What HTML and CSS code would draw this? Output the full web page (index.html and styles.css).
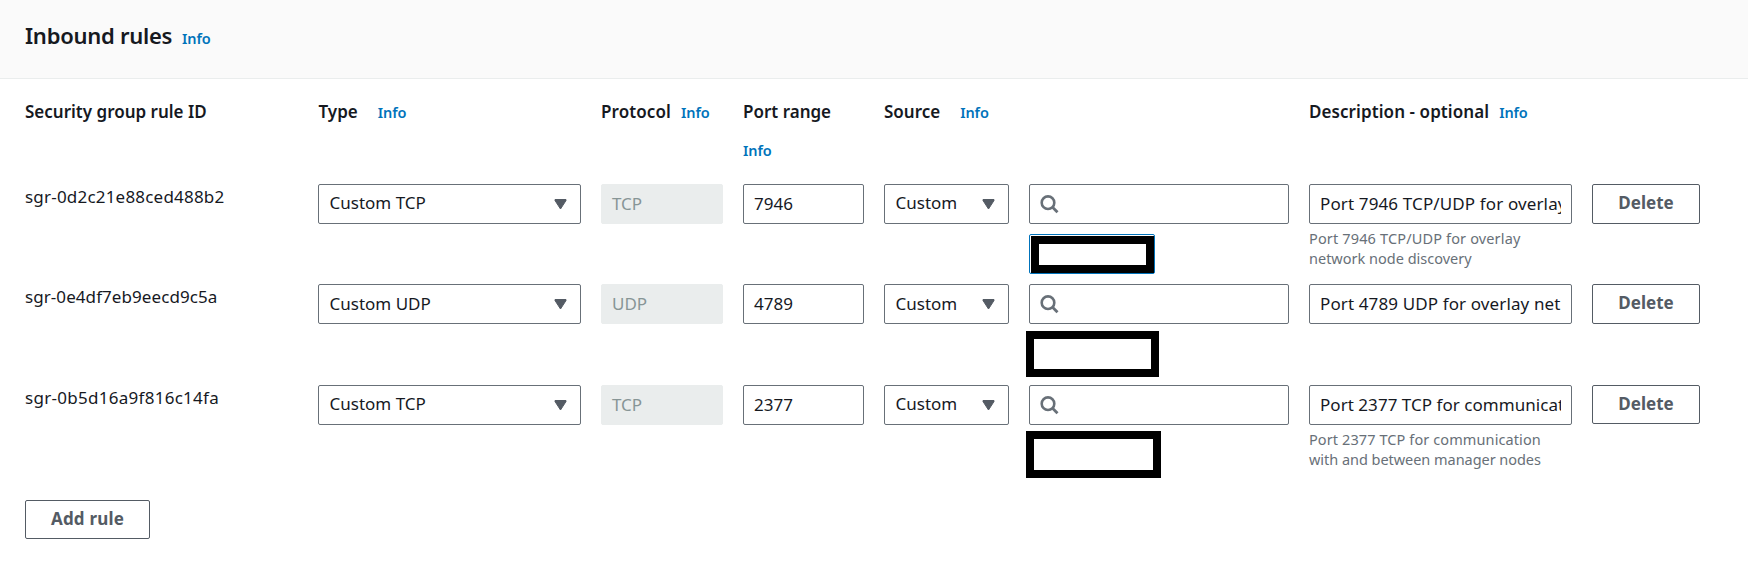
FILE: index.html
```html
<!DOCTYPE html>
<html lang="en">
<head>
<meta charset="utf-8">
<title>Inbound rules</title>
<link rel="stylesheet" href="styles.css">
</head>
<body>
<svg class="defs" aria-hidden="true">
  <symbol id="caret" viewBox="0 0 13 11"><path d="M1 .5h11v1L6.500 10 1 1.500z" fill="#545b64" stroke="#545b64" stroke-linejoin="round"/></symbol>
  <symbol id="search" viewBox="0 0 19 19"><circle cx="8" cy="7.700" r="6.300" fill="none" stroke="#687078" stroke-width="2.600"/><path d="M12.300 12l5.200 5.200" stroke="#687078" stroke-width="2.800"/></symbol>
</svg>
<header class="panel-header">
  <h1 class="title">Inbound rules</h1><a class="info">Info</a>
</header>
<main class="panel">
  <div class="grid head">
    <div class="label"><span class="t-id">Security group rule ID</span></div>
    <div class="label wide"><span class="t-type">Type</span><a class="info">Info</a></div>
    <div class="label"><span class="t-protocol">Protocol</span><a class="info">Info</a></div>
    <div class="label stacked"><span class="t-port">Port range</span><a class="info">Info</a></div>
    <div class="label wide source"><span class="t-source">Source</span><a class="info">Info</a></div>
    <div class="label"><span class="t-desc">Description - optional</span><a class="info">Info</a></div>
  </div>

  <div class="grid row first">
    <div class="rule-id">sgr-0d2c21e88ced488b2</div>
    <div class="select"><span>Custom TCP</span><svg class="caret"><use href="#caret"/></svg></div>
    <div class="field disabled">TCP</div>
    <div class="field">7946</div>
    <div class="select narrow"><span>Custom</span><svg class="caret"><use href="#caret"/></svg></div>
    <div class="search-cell">
      <div class="field"><svg class="search"><use href="#search"/></svg></div>
      <div class="token"><div class="mask mask-a"></div></div>
    </div>
    <div class="desc">
      <div class="field"><span class="clip d1">Port 7946 TCP/UDP for overlay</span></div>
      <div class="hint"><span class="h1">Port 7946 TCP/UDP for overlay</span><br><span class="h2">network node discovery</span></div>
    </div>
    <button class="button">Delete</button>
  </div>

  <div class="grid row second">
    <div class="rule-id">sgr-0e4df7eb9eecd9c5a</div>
    <div class="select"><span>Custom UDP</span><svg class="caret"><use href="#caret"/></svg></div>
    <div class="field disabled">UDP</div>
    <div class="field">4789</div>
    <div class="select narrow"><span>Custom</span><svg class="caret"><use href="#caret"/></svg></div>
    <div class="search-cell">
      <div class="field"><svg class="search"><use href="#search"/></svg></div>
      <div class="mask mask-b"></div>
    </div>
    <div class="desc">
      <div class="field"><span class="clip d2">Port 4789 UDP for overlay net</span></div>
    </div>
    <button class="button">Delete</button>
  </div>

  <div class="grid row third">
    <div class="rule-id">sgr-0b5d16a9f816c14fa</div>
    <div class="select"><span>Custom TCP</span><svg class="caret"><use href="#caret"/></svg></div>
    <div class="field disabled">TCP</div>
    <div class="field">2377</div>
    <div class="select narrow"><span>Custom</span><svg class="caret"><use href="#caret"/></svg></div>
    <div class="search-cell">
      <div class="field"><svg class="search"><use href="#search"/></svg></div>
      <div class="mask mask-c"></div>
    </div>
    <div class="desc">
      <div class="field"><span class="clip d3">Port 2377 TCP for communicat</span></div>
      <div class="hint"><span class="h3">Port 2377 TCP for communication</span><br><span class="h4">with and between manager nodes</span></div>
    </div>
    <button class="button">Delete</button>
  </div>

  <button class="button add">Add rule</button>
</main>
</body>
</html>
```
FILE: styles.css
```css
* { box-sizing: border-box; }
body {
  margin: 0;
  height: 563px;
  overflow: hidden;
  background: #fff;
  color: #16191f;
  font: 17px/24px "Noto Sans", "Open Sans", sans-serif;
}
.defs { display: none; }
.panel-header {
  display: flex;
  align-items: baseline;
  gap: 10px;
  height: 79px;
  padding: 20px 25px 0;
  background: #fafafa;
  border-bottom: 1px solid #eaeded;
}
.title { margin: 0; font-size: 22px; line-height: 30px; font-weight: 600; letter-spacing: -0.27px; }
.info { color: #0073bb; font-size: 14.5px; font-weight: 600; letter-spacing: -0.1px; }
.panel { padding: 0 25px; }
.grid {
  display: grid;
  grid-template-columns: 273px 263px 122px 121px 125px 260px 263px 108px;
  column-gap: 20px;
  align-items: start;
}
.head { height: 105px; padding-top: 21px; }
.label { display: flex; align-items: baseline; gap: 10px; font-weight: 600; white-space: nowrap; }
.wide { gap: 20px; }
.t-type { padding-left: 0.5px; }
.t-protocol { letter-spacing: 0.1px; }
.t-desc { letter-spacing: 0.08px; }
.source { grid-column: 5 / 7; }
.stacked { flex-direction: column; gap: 14px; }
.row { height: 100px; }
.second { height: 101px; }
.third { height: 115px; }
.rule-id { padding-top: 1px; letter-spacing: 0.2px; white-space: nowrap; }
.second .rule-id { letter-spacing: 0.07px; }
.third .rule-id { letter-spacing: 0.28px; }
.field, .select {
  display: flex;
  align-items: center;
  height: 40px;
  border: 1px solid #687078;
  border-radius: 2px;
  padding: 0 10px;
  background: #fff;
}
.select { justify-content: space-between; padding-right: 13.5px; padding-left: 10.5px; }
.first .select span, .third .select span { padding-bottom: 2px; }
.disabled { background: #eaeded; border-color: #eaeded; color: #879596; }
.caret { width: 13px; height: 11px; }
.search { width: 19px; height: 19px; }
.token {
  width: 126px;
  height: 40px;
  margin-top: 10px;
  padding: 1px 0 0 1px;
  border: 1px solid #0073bb;
  border-radius: 2px;
}
.mask { border: 8px solid #000; background: #fff; }
.mask-a { width: 123px; height: 37px; }
.mask-b { width: 133px; height: 46px; margin: 7px 0 0 -3px; }
.mask-c { width: 135px; height: 47px; margin: 6px 0 0 -3px; }
.clip { overflow: hidden; white-space: nowrap; letter-spacing: 0.12px; }
.d1 { letter-spacing: 0.13px; }
.d3 { letter-spacing: 0.04px; }
.hint { padding-top: 4px; color: #687078; font-size: 14.5px; line-height: 20px; white-space: nowrap; }
.h1 { letter-spacing: 0.15px; }
.h3 { letter-spacing: 0.1px; }
.h4 { letter-spacing: -0.04px; }
.button {
  height: 40px;
  padding: 0 0 2px;
  border: 1px solid #545b64;
  border-radius: 2px;
  background: #fff;
  color: #545b64;
  font: 700 17px/24px "Noto Sans", "Open Sans", sans-serif;
}
.third .button, .add { height: 39px; }
.add { display: block; width: 125px; letter-spacing: 0.2px; }
```
